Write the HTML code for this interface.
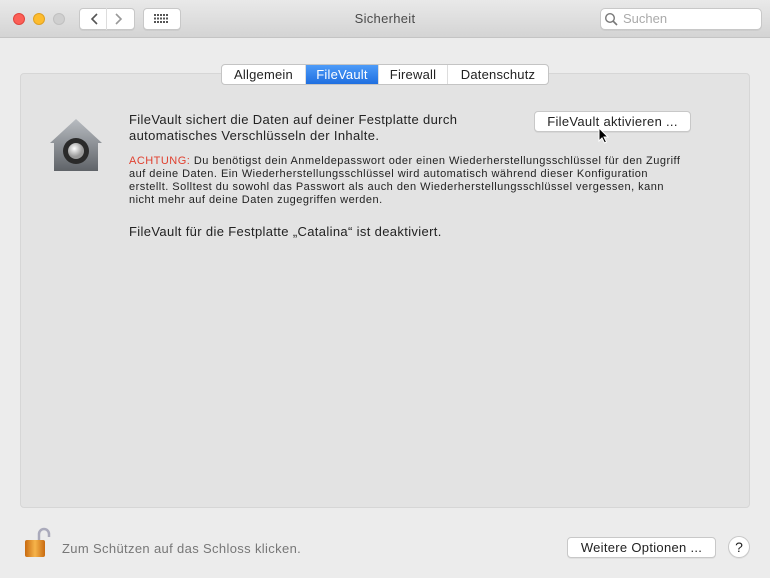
<!DOCTYPE html><html><head><meta charset="utf-8"><style>
*{margin:0;padding:0;box-sizing:border-box}
body{width:770px;height:578px;background:#ececec;font-family:"Liberation Sans",sans-serif;position:relative;overflow:hidden;color:#222}
.a{position:absolute}
.tb{left:0;top:0;width:770px;height:38px;background:linear-gradient(#e9e9e9,#d4d4d4);border-bottom:1px solid #c4c4c4}
.btn{background:#fff;border:1px solid #c8c8c8;border-radius:4px;box-shadow:0 1px 0 rgba(0,0,0,.05)}
.dot{width:12px;height:12px;border-radius:50%;top:13px}
.panel{left:20px;top:73px;width:730px;height:435px;background:#e3e3e3;border:1px solid #d6d6d6;border-radius:4px}
.tabs{left:221px;top:64px;height:21px;display:flex;border:1px solid #c4c4c4;border-radius:4px;background:#fff;font-size:13px;overflow:hidden;letter-spacing:.2px}
.tabs div{line-height:19px;text-align:center;border-right:1px solid #ddd}
.t13{font-size:13px;line-height:16px;letter-spacing:.35px}
.t11{font-size:11px;line-height:13px;letter-spacing:.48px;white-space:nowrap}
</style></head><body>
<div class="a tb"></div>
<div class="a dot" style="left:13px;background:#fc5f57;border:1px solid #e0443e"></div>
<div class="a dot" style="left:33px;background:#fdbc2e;border:1px solid #dea123"></div>
<div class="a dot" style="left:53px;background:#cfcfcf;border:1px solid #c0c0c0"></div>
<div class="a btn" style="left:79px;top:8px;width:56px;height:22px"></div>
<div class="a" style="left:106px;top:8px;width:1px;height:22px;background:#ddd"></div>
<svg class="a" style="left:86px;top:11px" width="44" height="16"><path d="M11 3 6 8l5 5" stroke="#555" stroke-width="1.6" fill="none"/><path d="M30 3l5 5-5 5" stroke="#999" stroke-width="1.6" fill="none"/></svg>
<div class="a btn" style="left:143px;top:8px;width:38px;height:22px"></div>
<svg class="a" style="left:154px;top:14px" width="16" height="10" fill="#555"><g id="r"><rect x="0" y="0" width="2" height="2"/><rect x="3" y="0" width="2" height="2"/><rect x="6" y="0" width="2" height="2"/><rect x="9" y="0" width="2" height="2"/><rect x="12" y="0" width="2" height="2"/></g><use href="#r" y="3.5"/><use href="#r" y="7"/></svg>
<div class="a" style="left:0;width:770px;top:11px;text-align:center;font-size:13px;color:#4a4a4a;letter-spacing:.3px">Sicherheit</div>
<div class="a btn" style="left:600px;top:8px;width:162px;height:22px;border-radius:5px"></div>
<svg class="a" style="left:604px;top:12px" width="14" height="14"><circle cx="6" cy="6" r="4.3" stroke="#777" stroke-width="1.4" fill="none"/><path d="M9 9l4 4" stroke="#777" stroke-width="1.6"/></svg>
<div class="a" style="left:623px;top:11px;font-size:13px;color:#aaa">Suchen</div>
<div class="a panel"></div>
<div class="a tabs"><div style="width:84px">Allgemein</div><div style="width:73px;background:linear-gradient(#4d9bf8,#1f6fe0);color:#fff">FileVault</div><div style="width:69px">Firewall</div><div style="width:100px;border:none">Datenschutz</div></div>
<svg class="a" style="left:46px;top:116px" width="60" height="58"><defs><linearGradient id="g" x1="0" y1="0" x2="0" y2="1"><stop offset="0" stop-color="#b8bcc1"/><stop offset="1" stop-color="#5f6368"/></linearGradient><radialGradient id="k" cx=".4" cy=".35"><stop offset="0" stop-color="#fff"/><stop offset="1" stop-color="#9a9a9a"/></radialGradient></defs><path d="M30 3 L4 27 h4 v28 h44 v-28 h4 z" fill="url(#g)"/><circle cx="30" cy="35" r="13" fill="#2a2a2a"/><circle cx="30" cy="35" r="8" fill="url(#k)"/></svg>
<div class="a t13" style="left:129px;top:112px">FileVault sichert die Daten auf deiner Festplatte durch<br>automatisches Verschlüsseln der Inhalte.</div>
<div class="a btn t13" style="left:534px;top:111px;width:157px;height:21px;text-align:center;line-height:19px;letter-spacing:.3px">FileVault aktivieren ...</div>
<svg class="a" style="left:598px;top:127px" width="12" height="18"><path d="M1 1v13l3-3 2.5 5 2-1-2.5-5h4z" fill="#000" stroke="#fff" stroke-width="1"/></svg>
<div class="a t11" style="left:129px;top:155px"><span style="color:#e0402f">ACHTUNG:</span> Du benötigst dein Anmeldepasswort oder einen Wiederherstellungsschlüssel für den Zugriff<br>auf deine Daten. Ein Wiederherstellungsschlüssel wird automatisch während dieser Konfiguration<br>erstellt. Solltest du sowohl das Passwort als auch den Wiederherstellungsschlüssel vergessen, kann<br>nicht mehr auf deine Daten zugegriffen werden.</div>
<div class="a t13" style="left:129px;top:224px">FileVault für die Festplatte „Catalina“ ist deaktiviert.</div>
<svg class="a" style="left:24px;top:526px" width="28" height="34"><defs><linearGradient id="o"><stop offset="0" stop-color="#c86a10"/><stop offset=".5" stop-color="#f6b44a"/><stop offset="1" stop-color="#c86a10"/></linearGradient></defs><path d="M15 14V8a5 5 0 0 1 10 0v3" stroke="#aab" stroke-width="2.5" fill="none"/><rect x="1" y="14" width="20" height="17" rx="2" fill="url(#o)"/></svg>
<div class="a t13" style="left:62px;top:541px;color:#777">Zum Schützen auf das Schloss klicken.</div>
<div class="a btn t13" style="left:567px;top:537px;width:149px;height:21px;text-align:center;line-height:19px;letter-spacing:.3px">Weitere Optionen ...</div>
<div class="a btn" style="left:728px;top:536px;width:22px;height:22px;border-radius:50%;text-align:center;font-size:14px;line-height:20px">?</div>
</body></html>
